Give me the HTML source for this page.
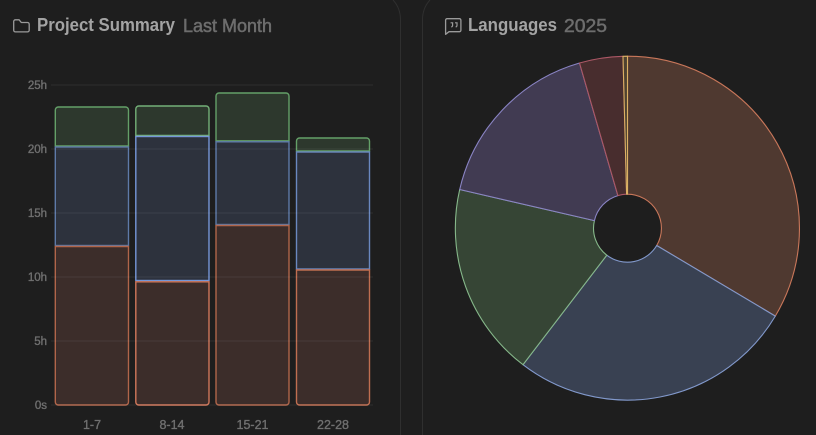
<!DOCTYPE html>
<html><head><meta charset="utf-8"><style>
html,body{margin:0;padding:0;background:#1e1e1e;width:816px;height:435px;overflow:hidden}
svg{display:block}
text{font-family:"Liberation Sans",sans-serif}
.ax{font-size:11.500px;font-weight:400;fill:#707070;stroke:#707070;stroke-width:.35}
.xl{font-size:12.500px}
.h{font-size:18px;font-weight:700;fill:#a3a3a3}
.s{font-size:18px;font-weight:400;fill:#6d6d6d;stroke:#6d6d6d;stroke-width:.5}
.g{stroke:#fff;stroke-opacity:.07;stroke-width:1}
</style></head><body>
<svg width="816" height="435" viewBox="0 0 816 435" xmlns="http://www.w3.org/2000/svg">
<rect width="816" height="435" fill="#1e1e1e"/>
<path d="M393 0Q400.500 8 400.500 20V435" fill="none" stroke="#2f2f2f"/>
<path d="M430 0Q422.500 8 422.500 20V435" fill="none" stroke="#2f2f2f"/>

<path d="M13.700 21.500a1.700 1.700 0 0 1 1.700-1.700h3.700l2.200 2.700h6.200a1.700 1.700 0 0 1 1.700 1.700v6a1.700 1.700 0 0 1-1.700 1.700H15.400a1.700 1.700 0 0 1-1.700-1.700z" fill="none" stroke="#9a9a9a" stroke-width="1.300" stroke-linejoin="round"/>
<text class="h" x="37" y="31" textLength="138" lengthAdjust="spacingAndGlyphs">Project Summary</text>
<text class="s" x="183" y="32" textLength="89" lengthAdjust="spacingAndGlyphs">Last Month</text>

<path d="M445.600 20.200a1.500 1.500 0 0 1 1.500-1.500h12.300a1.500 1.500 0 0 1 1.500 1.500v10a1.500 1.500 0 0 1-1.500 1.500h-10.400l-3.400 2.600z" fill="none" stroke="#9a9a9a" stroke-width="1.300" stroke-linejoin="round"/>
<path d="M450.600 22.800h2v2.400c0 .9-.4 1.500-1.300 1.800M455 22.800h2v2.400c0 .9-.4 1.500-1.300 1.800" fill="none" stroke="#9a9a9a" stroke-width="1.200"/>
<text class="h" x="468" y="31" textLength="89" lengthAdjust="spacingAndGlyphs">Languages</text>
<text class="s" x="564" y="32" textLength="43" lengthAdjust="spacingAndGlyphs">2025</text>

<g text-anchor="end" class="ax">
<text x="47" y="89">25h</text><text x="47" y="153">20h</text><text x="47" y="217">15h</text><text x="47" y="281">10h</text><text x="47" y="345">5h</text><text x="47" y="409">0s</text>
</g>
<g text-anchor="middle" class="ax xl">
<text x="92" y="429">1-7</text><text x="172" y="429">8-14</text><text x="252.500" y="429">15-21</text><text x="333" y="429">22-28</text>
</g>

<g stroke-width="1.400">
<!-- Bar 1 -->
<path d="M55.300 146V110a3 3 0 0 1 3-3h67.200a3 3 0 0 1 3 3v36z" fill="#2d382d" stroke="#64a068"/>
<rect x="55.300" y="147" width="73.200" height="98.500" fill="#2d323d" stroke="#5e7aa8"/>
<path d="M55.300 246.500h73.200V402a3 3 0 0 1-3 3H58.300a3 3 0 0 1-3-3z" fill="#3c2d2a" stroke="#b0654a"/>
<!-- Bar 2 -->
<path d="M135.800 135.500V109a3 3 0 0 1 3-3h67.200a3 3 0 0 1 3 3v26.500z" fill="#2d382d" stroke="#74b078"/>
<rect x="135.800" y="136.500" width="73.200" height="144" fill="#2d323d" stroke="#7596d8"/>
<path d="M135.800 281.800h73.200V402a3 3 0 0 1-3 3h-67.200a3 3 0 0 1-3-3z" fill="#3c2d2a" stroke="#d0775a"/>
<!-- Bar 3 -->
<path d="M216 140.800V96a3 3 0 0 1 3-3h67a3 3 0 0 1 3 3v44.800z" fill="#2d382d" stroke="#64a068"/>
<rect x="216" y="141.800" width="73" height="82.700" fill="#2d323d" stroke="#5e7aa8"/>
<path d="M216 225.500h73V402a3 3 0 0 1-3 3h-67a3 3 0 0 1-3-3z" fill="#3c2d2a" stroke="#b0654a"/>
<!-- Bar 4 -->
<path d="M296.500 151V141a3 3 0 0 1 3-3h67a3 3 0 0 1 3 3v10z" fill="#2d382d" stroke="#64a068"/>
<rect x="296.500" y="152" width="73" height="117" fill="#2d323d" stroke="#6a88c0"/>
<path d="M296.500 270h73V402a3 3 0 0 1-3 3h-67a3 3 0 0 1-3-3z" fill="#3c2d2a" stroke="#c06e50"/>
</g>
<g class="g">
<line x1="51" y1="85" x2="373" y2="85"/><line x1="51" y1="149" x2="373" y2="149"/><line x1="51" y1="213" x2="373" y2="213"/><line x1="51" y1="277" x2="373" y2="277"/><line x1="51" y1="341" x2="373" y2="341"/><line x1="51" y1="405" x2="373" y2="405"/>
</g>

<!-- Pie -->
<g stroke-width="1.100" stroke-linejoin="round">
<path d="M627.500 56.200A172 172 0 0 1 775.300 316.100L656.700 245.500A34 34 0 0 0 627.500 194.200z" fill="#4f3930" stroke="#c9775a"/>
<path d="M775.300 316.100A172 172 0 0 1 523 364.700L606.800 255.200A34 34 0 0 0 656.700 245.500z" fill="#394152" stroke="#8299cc"/>
<path d="M523 364.700A172 172 0 0 1 459.700 189.500L594.400 220.600A34 34 0 0 0 606.800 255.200z" fill="#364535" stroke="#86b88a"/>
<path d="M459.700 189.500A172 172 0 0 1 579.500 63L617.900 195.600A34 34 0 0 0 594.400 220.600z" fill="#413b52" stroke="#8a84c4"/>
<path d="M579.500 63A172 172 0 0 1 623 56.300L626.600 194.200A34 34 0 0 0 617.900 195.600z" fill="#482d2e" stroke="#ac5866"/>
<path d="M623 56.300A172 172 0 0 1 627.500 56.200V194.200A34 34 0 0 0 626.600 194.200z" fill="#4f4230" stroke="#dcb064"/>
</g>
</svg>
</body></html>
